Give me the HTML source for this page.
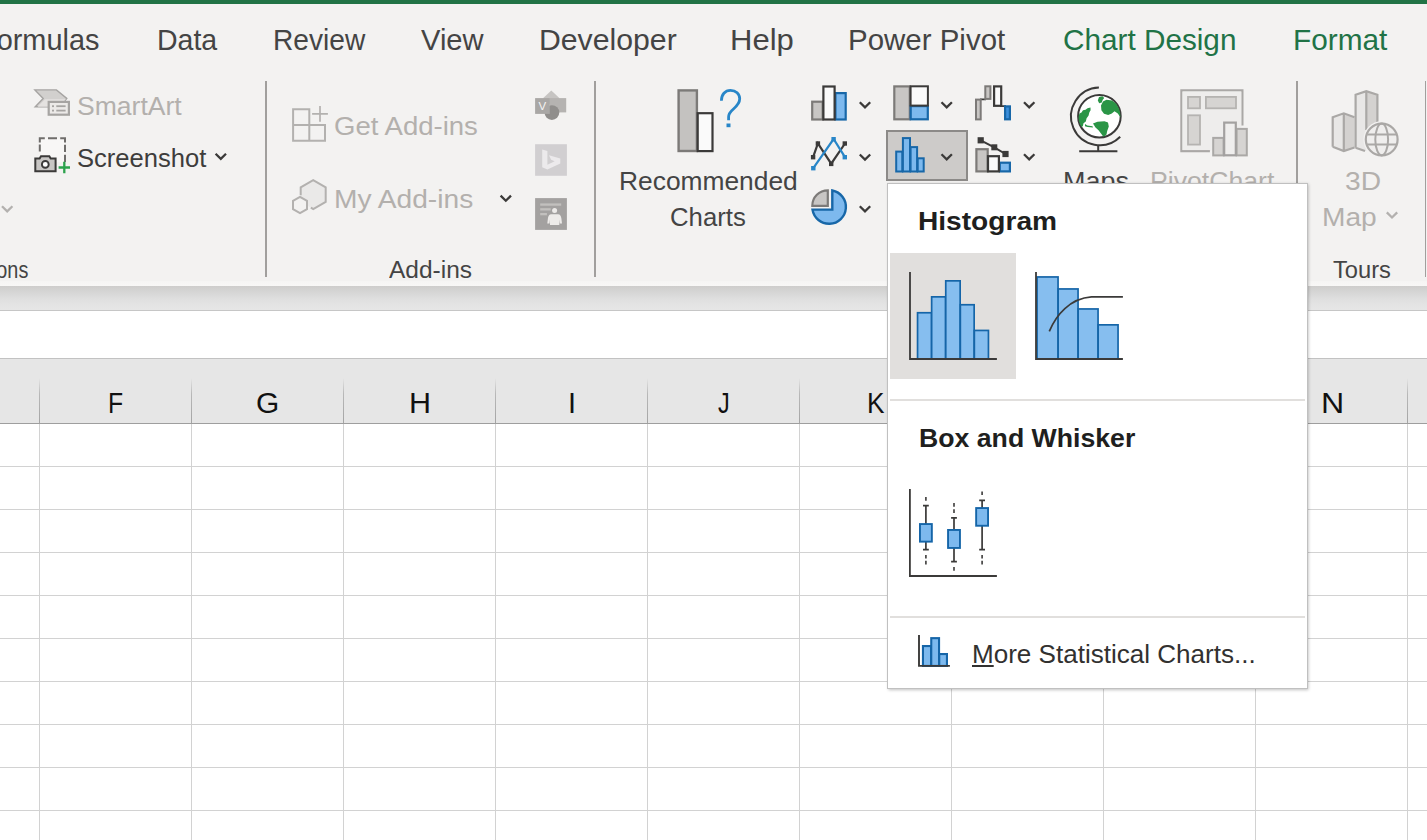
<!DOCTYPE html>
<html lang="en">
<head>
<meta charset="utf-8">
<title>Excel - Insert Statistic Chart</title>
<style>
html,body{margin:0;padding:0;}
body{width:1427px;height:840px;overflow:hidden;background:#fff;font-family:'Liberation Sans',sans-serif;}
#app{position:relative;width:1427px;height:840px;overflow:hidden;background:#fff;}
.abs,.t,svg.i{position:absolute;}
.t{white-space:pre;line-height:normal;transform-origin:0 50%;}
.t u{text-decoration-thickness:1.5px;text-underline-offset:1.5px;}
svg.i{overflow:visible;}
.topbar{left:0;top:0;width:1427px;height:4px;background:#217346;}
.ribbon{left:0;top:4px;width:1427px;height:282px;background:linear-gradient(#f3f2f1 0,#f3f2f1 276.5px,#f6f5f4 277.5px,#f8f7f6 282px);}
.sep{width:1.5px;top:81px;height:196px;background:#a19f9d;}
.under{left:0;top:286px;width:1427px;height:24px;background:linear-gradient(#cecdcc 0,#d8d8d8 33%,#e0e0e0 58%,#e4e4e4 80%,#e6e6e6 100%);}
.formula{left:0;top:310px;width:1427px;height:47px;background:#fff;border-top:1px solid #c6c6c6;border-bottom:1px solid #c2c2c2;box-sizing:content-box;}
.colhdr{left:0;top:359px;width:1427px;height:64px;background:#e6e6e6;border-bottom:1px solid #9e9e9e;}
.colhdr i{position:absolute;top:19px;width:1px;height:45px;background:linear-gradient(rgba(170,170,170,0) 0,#b8b8b8 35%,#a4a4a4 100%);}
.grid{left:0;top:424px;width:1427px;height:416px;background:#fff;}
.grid i{position:absolute;background:#d2d2d2;}
.grid i.v{top:0;width:1px;height:416px;}
.grid i.h{left:0;height:1px;width:1427px;}
.selbtn{left:886.2px;top:130.3px;width:81.5px;height:51px;box-sizing:border-box;background:#cdcbc9;border:2px solid #8c8a88;}
.menu{left:887px;top:183px;width:421px;height:506px;box-sizing:border-box;background:#fff;border:1.4px solid #c0c0c0;box-shadow:0.5px 1px 3px rgba(0,0,0,.25);}
.msel{left:890px;top:253.3px;width:126px;height:125.7px;background:#e1dfdd;}
.mhr{left:890px;width:415px;height:1.5px;background:#e1dfdd;}
</style>
</head>
<body>
<div id="app">
  <div class="abs topbar"></div>
  <div class="abs ribbon"></div>
  <div class="abs under"></div>
  <div class="abs formula"></div>
  <div class="abs colhdr">
    <i style="left:39px"></i><i style="left:191px"></i><i style="left:343px"></i><i style="left:495px"></i><i style="left:647px"></i><i style="left:799px"></i><i style="left:951px"></i><i style="left:1103px"></i><i style="left:1255px"></i><i style="left:1407px"></i>
  </div>
  <div class="abs grid">
    <i class="v" style="left:39px"></i><i class="v" style="left:191px"></i><i class="v" style="left:343px"></i><i class="v" style="left:495px"></i><i class="v" style="left:647px"></i><i class="v" style="left:799px"></i><i class="v" style="left:951px"></i><i class="v" style="left:1103px"></i><i class="v" style="left:1255px"></i><i class="v" style="left:1407px"></i><i class="h" style="top:42px"></i><i class="h" style="top:85px"></i><i class="h" style="top:128px"></i><i class="h" style="top:171px"></i><i class="h" style="top:214px"></i><i class="h" style="top:257px"></i><i class="h" style="top:300px"></i><i class="h" style="top:343px"></i><i class="h" style="top:386px"></i>
  </div>
<span class="t" style="left:107.7px;top:387.3px;font-size:29px;color:#111;transform:scaleX(0.8545);">F</span>
<span class="t" style="left:256.0px;top:387.3px;font-size:29px;color:#111;transform:scaleX(1.0318);">G</span>
<span class="t" style="left:408.5px;top:387.3px;font-size:29px;color:#111;transform:scaleX(1.0528);">H</span>
<span class="t" style="left:568.0px;top:387.3px;font-size:29px;color:#111;">I</span>
<span class="t" style="left:717.7px;top:387.3px;font-size:29px;color:#111;transform:scaleX(0.8097);">J</span>
<span class="t" style="left:867.1px;top:387.3px;font-size:29px;color:#111;transform:scaleX(0.9047);">K</span>
<span class="t" style="left:1021.0px;top:387.3px;font-size:29px;color:#111;transform:scaleX(0.8054);">L</span>
<span class="t" style="left:1168.0px;top:387.3px;font-size:29px;color:#111;transform:scaleX(0.9515);">M</span>
<span class="t" style="left:1320.6px;top:387.3px;font-size:29px;color:#111;transform:scaleX(1.1072);">N</span>
  <!-- ribbon separators -->
  <div class="abs sep" style="left:265.3px"></div>
  <div class="abs sep" style="left:594.2px"></div>
  <div class="abs sep" style="left:1296.2px"></div>
  <div class="abs sep" style="left:1424.8px"></div>
  <div class="abs selbtn"></div>
<span class="t" style="left:-21.4px;top:23.7px;font-size:29px;color:#444444;transform:scaleX(0.9962);">Formulas</span>
<span class="t" style="left:156.5px;top:23.7px;font-size:29px;color:#444444;transform:scaleX(0.9821);">Data</span>
<span class="t" style="left:272.8px;top:23.7px;font-size:29px;color:#444444;transform:scaleX(0.9695);">Review</span>
<span class="t" style="left:421.2px;top:23.7px;font-size:29px;color:#444444;transform:scaleX(1.0041);">View</span>
<span class="t" style="left:539.0px;top:23.7px;font-size:29px;color:#444444;transform:scaleX(1.0419);">Developer</span>
<span class="t" style="left:729.6px;top:23.7px;font-size:29px;color:#444444;transform:scaleX(1.0696);">Help</span>
<span class="t" style="left:847.7px;top:23.7px;font-size:29px;color:#444444;transform:scaleX(1.0161);">Power Pivot</span>
<span class="t" style="left:1062.8px;top:23.7px;font-size:29px;color:#217346;transform:scaleX(1.0247);">Chart Design</span>
<span class="t" style="left:1292.7px;top:23.7px;font-size:29px;color:#217346;transform:scaleX(1.0270);">Format</span>
<span class="t" style="left:76.6px;top:91.0px;font-size:26.5px;color:#b3b0ad;transform:scaleX(1.0013);">SmartArt</span>
<span class="t" style="left:76.5px;top:142.9px;font-size:26.5px;color:#3e3d3c;transform:scaleX(0.9652);">Screenshot</span>
<span class="t" style="left:333.8px;top:111.0px;font-size:26.5px;color:#b3b0ad;transform:scaleX(1.0392);">Get Add-ins</span>
<span class="t" style="left:333.8px;top:183.5px;font-size:26.5px;color:#b3b0ad;transform:scaleX(1.0622);">My Add-ins</span>
<span class="t" style="left:619.2px;top:165.7px;font-size:26.5px;color:#444444;transform:scaleX(0.9948);">Recommended</span>
<span class="t" style="left:670.4px;top:201.8px;font-size:26.5px;color:#444444;transform:scaleX(0.9709);">Charts</span>
<span class="t" style="left:1062.9px;top:165.7px;font-size:26.5px;color:#444444;transform:scaleX(1.0168);">Maps</span>
<span class="t" style="left:1149.5px;top:165.7px;font-size:26.5px;color:#b3b0ad;transform:scaleX(1.0047);">PivotChart</span>
<span class="t" style="left:1345.0px;top:165.7px;font-size:26.5px;color:#b3b0ad;transform:scaleX(1.0646);">3D</span>
<span class="t" style="left:1321.6px;top:201.6px;font-size:26.5px;color:#b3b0ad;transform:scaleX(1.0614);">Map</span>
<span class="t" style="left:-72.0px;top:255.6px;font-size:24.6px;color:#444444;transform:scaleX(0.8063);">Illustrations</span>
<span class="t" style="left:389.4px;top:255.7px;font-size:24.6px;color:#444444;transform:scaleX(0.9962);">Add-ins</span>
<span class="t" style="left:1332.7px;top:255.7px;font-size:24.6px;color:#444444;transform:scaleX(0.9632);">Tours</span>
<svg class="i" style="left:33px;top:87px" width="39" height="31" viewBox="33 87 39 31"><polygon points="34.9,89.9 56.4,89.9 66.8,98.4 60,106.8 35.2,106.8 43.2,98.4" fill="#d2d0ce" stroke="#a6a4a2" stroke-width="1.4" stroke-linejoin="miter"/><polygon points="45,99.2 66,99.2 58,106.8 37.5,106.8" fill="#e4e2e0"/><rect x="48.7" y="101.9" width="20.2" height="12.8" fill="#eceae8" stroke="#a6a4a2" stroke-width="2.2"/><rect x="52" y="105.3" width="2" height="1.8" fill="#a6a4a2"/><rect x="56.3" y="105.3" width="9.3" height="1.8" fill="#a6a4a2"/><rect x="52" y="109.7" width="2" height="1.8" fill="#a6a4a2"/><rect x="56.3" y="109.7" width="9.3" height="1.8" fill="#a6a4a2"/></svg>
<svg class="i" style="left:33px;top:135px" width="39" height="39" viewBox="33 135 39 39"><rect x="39.8" y="138.2" width="25.2" height="24" fill="#f8f7f6"/><path d="M39.8 151.6V144.6M39.8 142.4V138.2H44.8M48 138.2H57M60.2 138.2H65V142.4M65 144.8V152M65 154.8V162" fill="none" stroke="#6f6d6b" stroke-width="2"/><path d="M35.3 158.5H39.6L41 156.2H49.3L50.7 158.5H55.6V171.3H35.3Z" fill="#c8c6c4" stroke="#3b3a39" stroke-width="2" stroke-linejoin="miter"/><circle cx="45.3" cy="164.4" r="3.4" fill="#fff" stroke="#3b3a39" stroke-width="1.9"/><path d="M58.6 167.5H70M64.3 161.8V173.2" stroke="#2ba24c" stroke-width="2.3" fill="none"/></svg>
<svg class="i" style="left:290px;top:104px" width="40" height="40" viewBox="290 104 40 40"><path d="M293.1 109.3H309.3V140.7H293.1ZM293.1 125H325V140.7H309.3" fill="none" stroke="#b3b1af" stroke-width="2"/><path d="M312.1 113.9H327.9M320 106V121.8" fill="none" stroke="#b3b1af" stroke-width="1.7"/></svg>
<svg class="i" style="left:290px;top:176px" width="40" height="40" viewBox="290 176 40 40"><polygon points="313.2,180.2 325.7,187.4 325.7,201.8 313.2,209 300.7,201.8 300.7,187.4" fill="#eae9e8"/><path d="M300.7 195.3V187.4L313.2 180.2L325.7 187.4V201.8L313.2 209L310.8 207.7" fill="none" stroke="#b3b1af" stroke-width="2" stroke-linejoin="miter"/><polygon points="300,196.9 307,200.95 307,209.05 300,213.1 293,209.05 293,200.95" fill="#f3f2f1" stroke="#b3b1af" stroke-width="2"/></svg>
<svg class="i" style="left:533px;top:88px" width="36" height="34" viewBox="533 88 36 34"><polygon points="551.3,90.6 559.6,98.3 551.3,106 543,98.3" fill="#c6c4c2"/><rect x="549.8" y="98.1" width="16.4" height="14.3" fill="#b5b3b1"/><circle cx="551.9" cy="112.6" r="7.4" fill="#908e8c"/><rect x="535.1" y="98.1" width="14.7" height="15.8" fill="#a9a7a5"/><text x="542.4" y="110.4" font-family="Liberation Sans, sans-serif" font-weight="400" font-size="11.5" fill="#f5f4f3" text-anchor="middle">V</text></svg>
<svg class="i" style="left:533px;top:142px" width="36" height="36" viewBox="533 142 36 36"><rect x="535.1" y="144.2" width="31.8" height="31.6" fill="#d1cfd1"/><path transform="translate(542.2 149.6) scale(1.3 1.08)" d="M0 0L4 1.4V14L9.6 10.8L6.9 9.5L5.2 5.3L13.9 8.3V12.8L4 18.5L0 16.3Z" fill="#eceaec"/></svg>
<svg class="i" style="left:533px;top:196px" width="36" height="36" viewBox="533 196 36 36"><rect x="535.1" y="198.1" width="31.8" height="31.8" fill="#a3a1a0"/><rect x="540.2" y="203.4" width="21" height="2.3" fill="#c2c0be"/><rect x="540.2" y="208.2" width="10.5" height="2.3" fill="#c2c0be"/><rect x="540.2" y="213" width="6.7" height="2.3" fill="#c2c0be"/><circle cx="554.6" cy="210.4" r="2.5" fill="#edebe9"/><path d="M551.3 214.2H558C560.2 214.2 561 216 561.4 218.5L562 223.6H559.8L559.3 219.5V224.9H550V219.5L549.5 223.6H547.3L547.9 218.5C548.3 216 549.1 214.2 551.3 214.2Z" fill="#edebe9"/></svg>
<svg class="i" style="left:675px;top:86px" width="70" height="70" viewBox="675 86 70 70"><rect x="678.60" y="90.40" width="18.30" height="60.60" fill="#c4c2c0" stroke="#7c7a78" stroke-width="2.4"/><rect x="697.70" y="113.20" width="14.80" height="37.90" fill="#fafafa" stroke="#3b3a39" stroke-width="2.2"/><path d="M721.4 100.7C721.4 94.6 725 90.3 730.5 90.3C735.9 90.3 739.7 93.9 739.7 98.8C739.7 103.6 736.6 106.3 733.2 109.2C730.2 111.7 728.6 113.6 728.6 117V120.3" fill="none" stroke="#2886c8" stroke-width="2.8"/><rect x="726.5" y="123.5" width="4" height="3.7" fill="#2886c8"/></svg>
<svg class="i" style="left:809px;top:83px" width="40" height="40" viewBox="809 83 40 40"><rect x="812.20" y="101.70" width="10.50" height="17.80" fill="#c8c6c4" stroke="#7c7a78" stroke-width="2.2"/><rect x="835.40" y="93.10" width="10.30" height="26.40" fill="#7db9ee" stroke="#1767a8" stroke-width="2.2"/><rect x="823.40" y="86.50" width="11.20" height="33.00" fill="#fafafa" stroke="#3b3a39" stroke-width="2.2"/></svg>
<svg class="i" style="left:809px;top:134px" width="40" height="40" viewBox="809 134 40 40"><path d="M813.1 157.2L817.9 143.5L831.2 163.7L845 143.5" fill="none" stroke="#3b3a39" stroke-width="2.2" stroke-linejoin="miter"/><rect x="810.90" y="155.00" width="4.4" height="4.4" fill="#3b3a39"/><rect x="815.70" y="141.30" width="4.4" height="4.4" fill="#3b3a39"/><rect x="829.00" y="161.70" width="4.4" height="4.4" fill="#3b3a39"/><rect x="842.60" y="141.30" width="4.4" height="4.4" fill="#3b3a39"/><path d="M813.3 168.2L833.6 139L845 157.2" fill="none" stroke="#2886c8" stroke-width="2.2" stroke-linejoin="miter"/><rect x="811.10" y="166.00" width="4.4" height="4.4" fill="#2886c8"/><rect x="831.40" y="137.00" width="4.4" height="4.4" fill="#2886c8"/><rect x="842.60" y="155.00" width="4.4" height="4.4" fill="#2886c8"/></svg>
<svg class="i" style="left:809px;top:187px" width="40" height="40" viewBox="809 187 40 40"><path d="M832.3 190.5A16.8 16.8 0 1 1 812.5 209.6H832.3Z" fill="#7db9ee" stroke="#1767a8" stroke-width="2.4" stroke-linejoin="miter"/><path d="M827.8 205.8V190.3A15.5 15.5 0 0 0 812.3 205.8Z" fill="#c8c6c4" stroke="#7c7a78" stroke-width="2.2" stroke-linejoin="miter"/></svg>
<svg class="i" style="left:891px;top:83px" width="40" height="40" viewBox="891 83 40 40"><rect x="894.30" y="86.40" width="15.50" height="32.90" fill="#c8c6c4" stroke="#7c7a78" stroke-width="2.2"/><rect x="910.70" y="106.10" width="17.10" height="13.20" fill="#7db9ee" stroke="#1767a8" stroke-width="2.2"/><rect x="910.60" y="86.30" width="17.30" height="19.30" fill="#fafafa" stroke="#3b3a39" stroke-width="2.0"/></svg>
<svg class="i" style="left:893px;top:135px" width="34" height="40" viewBox="893 135 34 40"><rect x="896.20" y="151.60" width="6.10" height="19.90" fill="#7db9ee" stroke="#1767a8" stroke-width="2"/><rect x="902.90" y="138.10" width="7.10" height="33.40" fill="#7db9ee" stroke="#1767a8" stroke-width="2"/><rect x="910.60" y="147.10" width="6.50" height="24.40" fill="#7db9ee" stroke="#1767a8" stroke-width="2"/><rect x="917.70" y="158.30" width="6.00" height="13.20" fill="#7db9ee" stroke="#1767a8" stroke-width="2"/></svg>
<svg class="i" style="left:973px;top:83px" width="40" height="40" viewBox="973 83 40 40"><path d="M980 99.3H986M1000 106.1H1006" stroke="#3b3a39" stroke-width="1.8" fill="none"/><rect x="976.00" y="99.60" width="4.70" height="19.80" fill="#c8c6c4" stroke="#7c7a78" stroke-width="2"/><rect x="985.30" y="86.30" width="5.10" height="12.60" fill="#c8c6c4" stroke="#7c7a78" stroke-width="2"/><rect x="994.10" y="86.40" width="7.10" height="19.40" fill="#fafafa" stroke="#3b3a39" stroke-width="2.2"/><rect x="1005.10" y="106.40" width="4.80" height="12.90" fill="#3a8fdc" stroke="#1767a8" stroke-width="2.2"/></svg>
<svg class="i" style="left:973px;top:135px" width="40" height="40" viewBox="973 135 40 40"><rect x="976.40" y="149.20" width="11.30" height="22.20" fill="#c8c6c4" stroke="#7c7a78" stroke-width="2.2"/><rect x="999.80" y="162.70" width="10.10" height="8.70" fill="#7db9ee" stroke="#1767a8" stroke-width="2.2"/><rect x="988.00" y="156.20" width="10.90" height="15.20" fill="#fafafa" stroke="#3b3a39" stroke-width="2.2"/><path d="M980.7 140.3L994.3 147.3L1005.5 154" fill="none" stroke="#3b3a39" stroke-width="2"/><rect x="977.60" y="137.20" width="6.2" height="6.2" fill="#3b3a39"/><rect x="991.30" y="144.30" width="6" height="6" fill="#3b3a39"/><rect x="1002.40" y="150.90" width="6.2" height="6.2" fill="#3b3a39"/></svg>
<svg class="i" style="left:1066px;top:84px" width="60" height="72" viewBox="1066 84 60 72"><defs><clipPath id="gc"><circle cx="1099.4" cy="116.2" r="21"/></clipPath></defs><circle cx="1099.4" cy="116.2" r="21.3" fill="#fff" stroke="#3b3a39" stroke-width="2"/><g clip-path="url(#gc)" fill="#2a9546"><path d="M1090.5 107.5L1087.5 108.2L1085.5 109.8L1083 110.2L1081.5 112.6L1079.5 113.5L1078 118L1078.3 124.5L1080.5 127.5L1082.8 126.2L1083.5 123.2L1085.8 121.5L1086.6 118.2L1088.6 115.6L1089.4 112.2L1090.6 110.3Z"/><path d="M1085 124L1087.3 125.6L1092.5 126.2L1093 127.4L1087.6 127L1085 126.2Z"/><path d="M1099 97L1102.5 96.2L1104.2 98L1102.6 100L1101.8 102.6L1099.2 103.2L1097.8 100.6Z"/><path d="M1103 101.5L1106.5 99.8L1112 100.5L1116.5 104L1119.5 108.5L1121.5 114.5L1120.6 117.5L1117.8 113.6L1114.5 111.2L1111.8 113.4L1108.2 115L1104 113.8L1101.4 110.2L1101 105.5Z"/><path d="M1093 123.5L1097.5 121.8L1104.5 121.3L1108 122.5L1108.8 126.5L1107.2 131L1106.5 134.5L1103.5 137L1101.4 134L1098.5 130.2L1095.5 127.6Z"/></g><path d="M1098.9 87.6A28.8 28.8 0 1 0 1120.2 136.7" fill="none" stroke="#3b3a39" stroke-width="2"/><path d="M1098.2 144.9V151.3M1079.2 151.3H1117.4" fill="none" stroke="#3b3a39" stroke-width="2"/></svg>
<svg class="i" style="left:1178px;top:87px" width="72" height="72" viewBox="1178 87 72 72"><path d="M1209.9 151.2H1181.4V90.4H1242.4V125.6" fill="#edeceb" stroke="#aaa8a6" stroke-width="2.2"/><rect x="1182.5" y="91.5" width="58.8" height="58.6" fill="#eeedec"/><rect x="1188.00" y="96.90" width="12.00" height="11.40" fill="#d6d4d2" stroke="#b5b3b1" stroke-width="1.8"/><rect x="1205.90" y="96.90" width="30.10" height="11.40" fill="#d6d4d2" stroke="#b5b3b1" stroke-width="1.8"/><rect x="1188.00" y="115.30" width="12.00" height="29.30" fill="#d6d4d2" stroke="#b5b3b1" stroke-width="1.8"/><rect x="1213.20" y="137.90" width="10.40" height="17.50" fill="#d6d4d2" stroke="#aaa8a6" stroke-width="2"/><rect x="1236.60" y="128.90" width="10.20" height="26.50" fill="#d6d4d2" stroke="#aaa8a6" stroke-width="2"/><rect x="1224.20" y="122.60" width="11.60" height="32.70" fill="#efeeed" stroke="#a3a1a0" stroke-width="2.2"/></svg>
<svg class="i" style="left:1328px;top:87px" width="74" height="74" viewBox="1328 87 74 74"><polygon points="1332.7,117.2 1343.8,113.3 1343.8,151 1332.7,146.8" fill="#e8e7e6"/><polygon points="1343.8,113.3 1354.5,117.2 1354.5,147.5 1343.8,151" fill="#d4d2d0"/><polygon points="1355.6,94.8 1366.3,91.2 1366.3,151 1355.6,147.5" fill="#e8e7e6"/><polygon points="1366.3,91.2 1377.4,94.8 1377.4,140 1366.3,140" fill="#d4d2d0"/><path d="M1332.7 146.8V117.2L1343.8 113.3L1354.5 117.2M1343.8 113.3V151M1332.7 146.8L1343.8 151L1354.5 147.5" fill="none" stroke="#aaa8a6" stroke-width="2.2" stroke-linejoin="miter"/><path d="M1355.6 147.8V94.8L1366.3 91.2L1377.4 94.8V126M1366.3 91.2V130M1355.6 147.8L1365 151" fill="none" stroke="#aaa8a6" stroke-width="2.2" stroke-linejoin="miter"/><circle cx="1381.7" cy="139.5" r="18.3" fill="#f3f2f1"/><circle cx="1381.7" cy="139.5" r="15.9" fill="#efeeed" stroke="#aaa8a6" stroke-width="2.2"/><ellipse cx="1381.7" cy="139.5" rx="6.4" ry="15.9" fill="none" stroke="#aaa8a6" stroke-width="2"/><path d="M1367.2 134.4H1396.2M1367.2 144.4H1396.2" fill="none" stroke="#aaa8a6" stroke-width="2"/></svg>
<svg class="i" style="left:0px;top:90px" width="1427" height="140" viewBox="0 90 1427 140"><path d="M859.8 102.2L865.0 107.3L870.2 102.2" fill="none" stroke="#3b3a39" stroke-width="2.3"/><path d="M859.8 154.5L865.0 159.6L870.2 154.5" fill="none" stroke="#3b3a39" stroke-width="2.3"/><path d="M859.8 206.2L865.0 211.3L870.2 206.2" fill="none" stroke="#3b3a39" stroke-width="2.3"/><path d="M941.5 102.2L946.7 107.3L951.9 102.2" fill="none" stroke="#3b3a39" stroke-width="2.3"/><path d="M941.5 154.3L946.7 159.4L951.9 154.3" fill="none" stroke="#3b3a39" stroke-width="2.3"/><path d="M1024.0 102.2L1029.2 107.3L1034.4 102.2" fill="none" stroke="#3b3a39" stroke-width="2.3"/><path d="M1024.0 154.3L1029.2 159.4L1034.4 154.3" fill="none" stroke="#3b3a39" stroke-width="2.3"/><path d="M215.6 153.8L220.8 158.9L226.0 153.8" fill="none" stroke="#3b3a39" stroke-width="2.3"/><path d="M500.6 195.6L505.8 200.7L511.0 195.6" fill="none" stroke="#3b3a39" stroke-width="2.3"/><path d="M2.0 206.2L7.2 211.3L12.4 206.2" fill="none" stroke="#b3b1af" stroke-width="2.3"/><path d="M1386.8 212.4L1392.0 217.5L1397.2 212.4" fill="none" stroke="#b3b1af" stroke-width="2.3"/></svg>
  <!-- dropdown menu -->
  <div class="abs menu"></div>
  <div class="abs msel"></div>
  <div class="abs mhr" style="top:399.3px"></div>
  <div class="abs mhr" style="top:616px"></div>
<span class="t" style="left:918.2px;top:206.0px;font-size:26.5px;color:#201f1e;font-weight:700;transform:scaleX(1.0609);">Histogram</span>
<span class="t" style="left:918.9px;top:422.6px;font-size:26.5px;color:#201f1e;font-weight:700;transform:scaleX(1.0060);">Box and Whisker</span>
<span class="t" style="left:971.6px;top:638.5px;font-size:26.5px;color:#323130;transform:scaleX(0.9830);"><u>M</u>ore Statistical Charts...</span>
<svg class="i" style="left:905px;top:268px" width="96" height="96" viewBox="905 268 96 96"><rect x="917.55" y="312.75" width="14.00" height="46.40" fill="#86beef" stroke="#1565a8" stroke-width="1.7"/><rect x="931.65" y="296.85" width="13.90" height="62.30" fill="#86beef" stroke="#1565a8" stroke-width="1.7"/><rect x="945.75" y="280.85" width="14.40" height="78.30" fill="#86beef" stroke="#1565a8" stroke-width="1.7"/><rect x="960.35" y="304.75" width="13.80" height="54.40" fill="#86beef" stroke="#1565a8" stroke-width="1.7"/><rect x="974.35" y="330.45" width="14.10" height="28.70" fill="#86beef" stroke="#1565a8" stroke-width="1.7"/><path d="M910 271.9V359H996.9" fill="none" stroke="#3b3a39" stroke-width="1.8"/></svg>
<svg class="i" style="left:1030px;top:268px" width="96" height="96" viewBox="1030 268 96 96"><rect x="1037.05" y="276.95" width="21.00" height="82.20" fill="#86beef" stroke="#1565a8" stroke-width="1.7"/><rect x="1058.15" y="288.95" width="19.90" height="70.20" fill="#86beef" stroke="#1565a8" stroke-width="1.7"/><rect x="1078.15" y="308.95" width="19.90" height="50.20" fill="#86beef" stroke="#1565a8" stroke-width="1.7"/><rect x="1098.15" y="324.85" width="19.90" height="34.30" fill="#86beef" stroke="#1565a8" stroke-width="1.7"/><path d="M1036 271.9V359H1122.9" fill="none" stroke="#3b3a39" stroke-width="1.8"/><path d="M1049.3 331.4C1056 315 1070 298.4 1091.5 296.9H1122.9" fill="none" stroke="#3b3a39" stroke-width="1.7"/></svg>
<svg class="i" style="left:905px;top:486px" width="96" height="94" viewBox="905 486 96 94"><path d="M925.9 505.7V549.6M923.0 505.7H928.8M923.0 549.6H928.8" fill="none" stroke="#3b3a39" stroke-width="1.7"/><path d="M925.9 497.1V500.7" stroke="#3b3a39" stroke-width="1.6" fill="none"/><path d="M925.9 555V558.6" stroke="#3b3a39" stroke-width="1.6" fill="none"/><path d="M925.9 560.7V564.6" stroke="#3b3a39" stroke-width="1.6" fill="none"/><rect x="919.95" y="524.05" width="11.90" height="17.60" fill="#7db9ee" stroke="#1565a8" stroke-width="1.9"/><path d="M954 517.9V561.7M951.1 517.9H956.9M951.1 561.7H956.9" fill="none" stroke="#3b3a39" stroke-width="1.7"/><path d="M954 503.1V506.7" stroke="#3b3a39" stroke-width="1.6" fill="none"/><path d="M954 509.3V512.9" stroke="#3b3a39" stroke-width="1.6" fill="none"/><path d="M954 567.1V570.7" stroke="#3b3a39" stroke-width="1.6" fill="none"/><rect x="948.05" y="529.95" width="11.90" height="18.00" fill="#7db9ee" stroke="#1565a8" stroke-width="1.9"/><path d="M982.1 500.3V549.7M979.2 500.3H985.0M979.2 549.7H985.0" fill="none" stroke="#3b3a39" stroke-width="1.7"/><path d="M982.1 491.4V495" stroke="#3b3a39" stroke-width="1.6" fill="none"/><path d="M982.1 555V558.6" stroke="#3b3a39" stroke-width="1.6" fill="none"/><path d="M982.1 560.7V564.6" stroke="#3b3a39" stroke-width="1.6" fill="none"/><rect x="976.15" y="508.05" width="11.90" height="17.70" fill="#7db9ee" stroke="#1565a8" stroke-width="1.9"/><path d="M909.9 489V576H996.9" fill="none" stroke="#3b3a39" stroke-width="1.8"/></svg>
<svg class="i" style="left:915px;top:632px" width="38" height="38" viewBox="915 632 38 38"><rect x="922.95" y="646.05" width="8.10" height="19.90" fill="#7db9ee" stroke="#1565a8" stroke-width="2.1"/><rect x="931.25" y="638.15" width="7.80" height="27.80" fill="#7db9ee" stroke="#1565a8" stroke-width="2.1"/><rect x="939.25" y="654.05" width="7.70" height="11.90" fill="#7db9ee" stroke="#1565a8" stroke-width="2.1"/><path d="M919 635V665.9H949.9" fill="none" stroke="#3b3a39" stroke-width="1.9"/></svg>
</div>
</body>
</html>
